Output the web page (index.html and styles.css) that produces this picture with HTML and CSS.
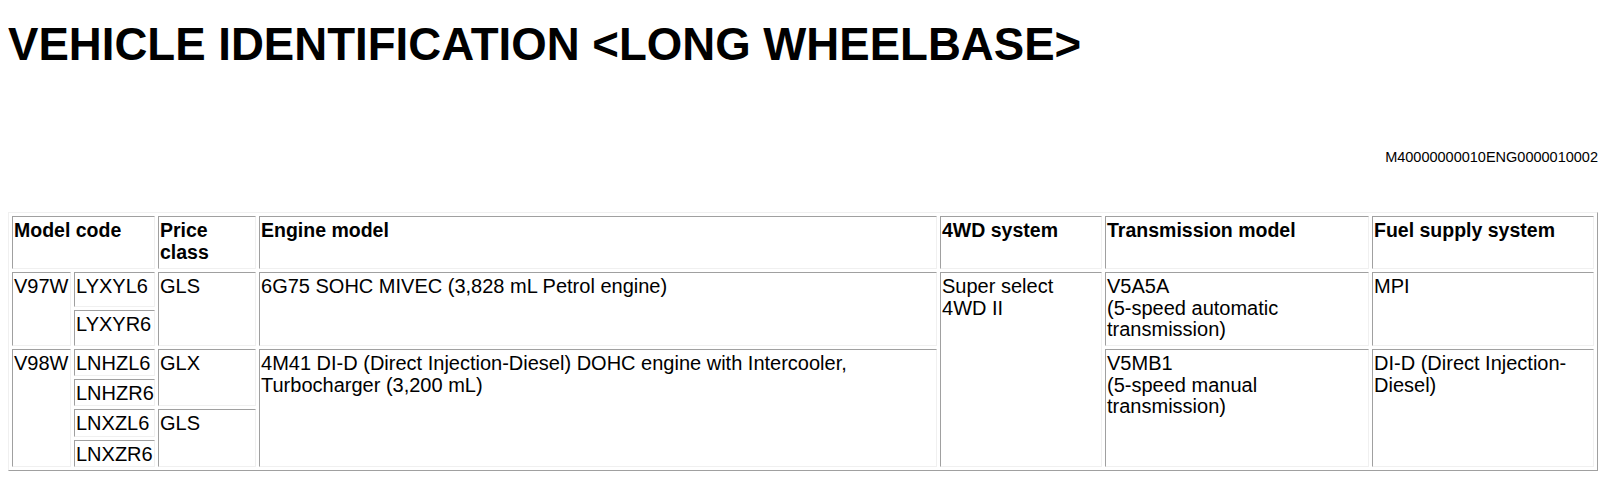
FILE: index.html
```html
<!DOCTYPE html>
<html lang="en">
<head>
<meta charset="utf-8">
<title>Vehicle Identification</title>
<link rel="stylesheet" href="styles.css">
</head>
<body>
<div class="page">
  <h1 class="title">VEHICLE IDENTIFICATION &lt;LONG WHEELBASE&gt;</h1>
  <p class="doc-id">M40000000010ENG0000010002</p>
  <table class="spec">
    <colgroup>
      <col class="c-code1">
      <col class="c-code2">
      <col class="c-price">
      <col class="c-engine">
      <col class="c-4wd">
      <col class="c-trans">
      <col class="c-fuel">
    </colgroup>
    <thead>
      <tr class="r-head">
        <th colspan="2">Model code</th>
        <th>Price class</th>
        <th>Engine model</th>
        <th>4WD system</th>
        <th>Transmission model</th>
        <th>Fuel supply system</th>
      </tr>
    </thead>
    <tbody>
      <tr class="r-a1">
        <td rowspan="2">V97W</td>
        <td>LYXYL6</td>
        <td rowspan="2">GLS</td>
        <td rowspan="2">6G75 SOHC MIVEC (3,828 mL Petrol engine)</td>
        <td rowspan="6">Super select 4WD II</td>
        <td rowspan="2">V5A5A<br>(5-speed automatic transmission)</td>
        <td rowspan="2">MPI</td>
      </tr>
      <tr class="r-a2">
        <td>LYXYR6</td>
      </tr>
      <tr class="r-b">
        <td rowspan="4">V98W</td>
        <td>LNHZL6</td>
        <td rowspan="2">GLX</td>
        <td rowspan="4">4M41 DI-D (Direct Injection-Diesel) DOHC engine with Intercooler, Turbocharger (3,200 mL)</td>
        <td rowspan="4">V5MB1<br>(5-speed manual transmission)</td>
        <td rowspan="4">DI-D (Direct Injection-Diesel)</td>
      </tr>
      <tr class="r-b">
        <td>LNHZR6</td>
      </tr>
      <tr class="r-b2">
        <td>LNXZL6</td>
        <td rowspan="2">GLS</td>
      </tr>
      <tr class="r-b">
        <td>LNXZR6</td>
      </tr>
    </tbody>
  </table>
</div>
</body>
</html>
```

FILE: styles.css
```css
html, body {
  background: #ffffff;
}

body {
  margin: 8px;
  font-family: "Liberation Sans", Arial, sans-serif;
  color: #000000;
}

.page {
  width: 1590px;
}

.title {
  margin: 11px 0 0 0;
  font-size: 45.6px;
  line-height: 52px;
  font-weight: bold;
  white-space: nowrap;
}

.doc-id {
  margin: 78px 0 0 0;
  font-size: 14.5px;
  line-height: 17px;
  text-align: right;
}

.spec {
  margin-top: 46px;
  width: 1590px;
  table-layout: fixed;
  border-collapse: separate;
  border-spacing: 3px;
  border-style: solid;
  border-width: 1px;
  border-color: #f0f0f0 #a0a0a0 #a0a0a0 #f0f0f0;
  font-size: 20px;
  line-height: 21.5px;
}

.c-code1 { width: 59px; }
.c-code2 { width: 81px; }
.c-price { width: 98px; }
.c-engine { width: 678px; }
.c-4wd { width: 162px; }
.c-trans { width: 264px; }
.c-fuel { width: 222px; }

.spec th,
.spec td {
  box-sizing: border-box;
  padding: 3px 1px 0 1px;
  vertical-align: top;
  text-align: left;
  border-style: solid;
  border-width: 1px;
  border-color: #a0a0a0 #f0f0f0 #f0f0f0 #a0a0a0;
}

.spec th {
  font-weight: bold;
  font-size: 19.5px;
}

.r-head { height: 53px; }
.r-a1 { height: 35px; }
.r-a2 { height: 36px; }
.r-b { height: 27px; }
.r-b2 { height: 28px; }
```
